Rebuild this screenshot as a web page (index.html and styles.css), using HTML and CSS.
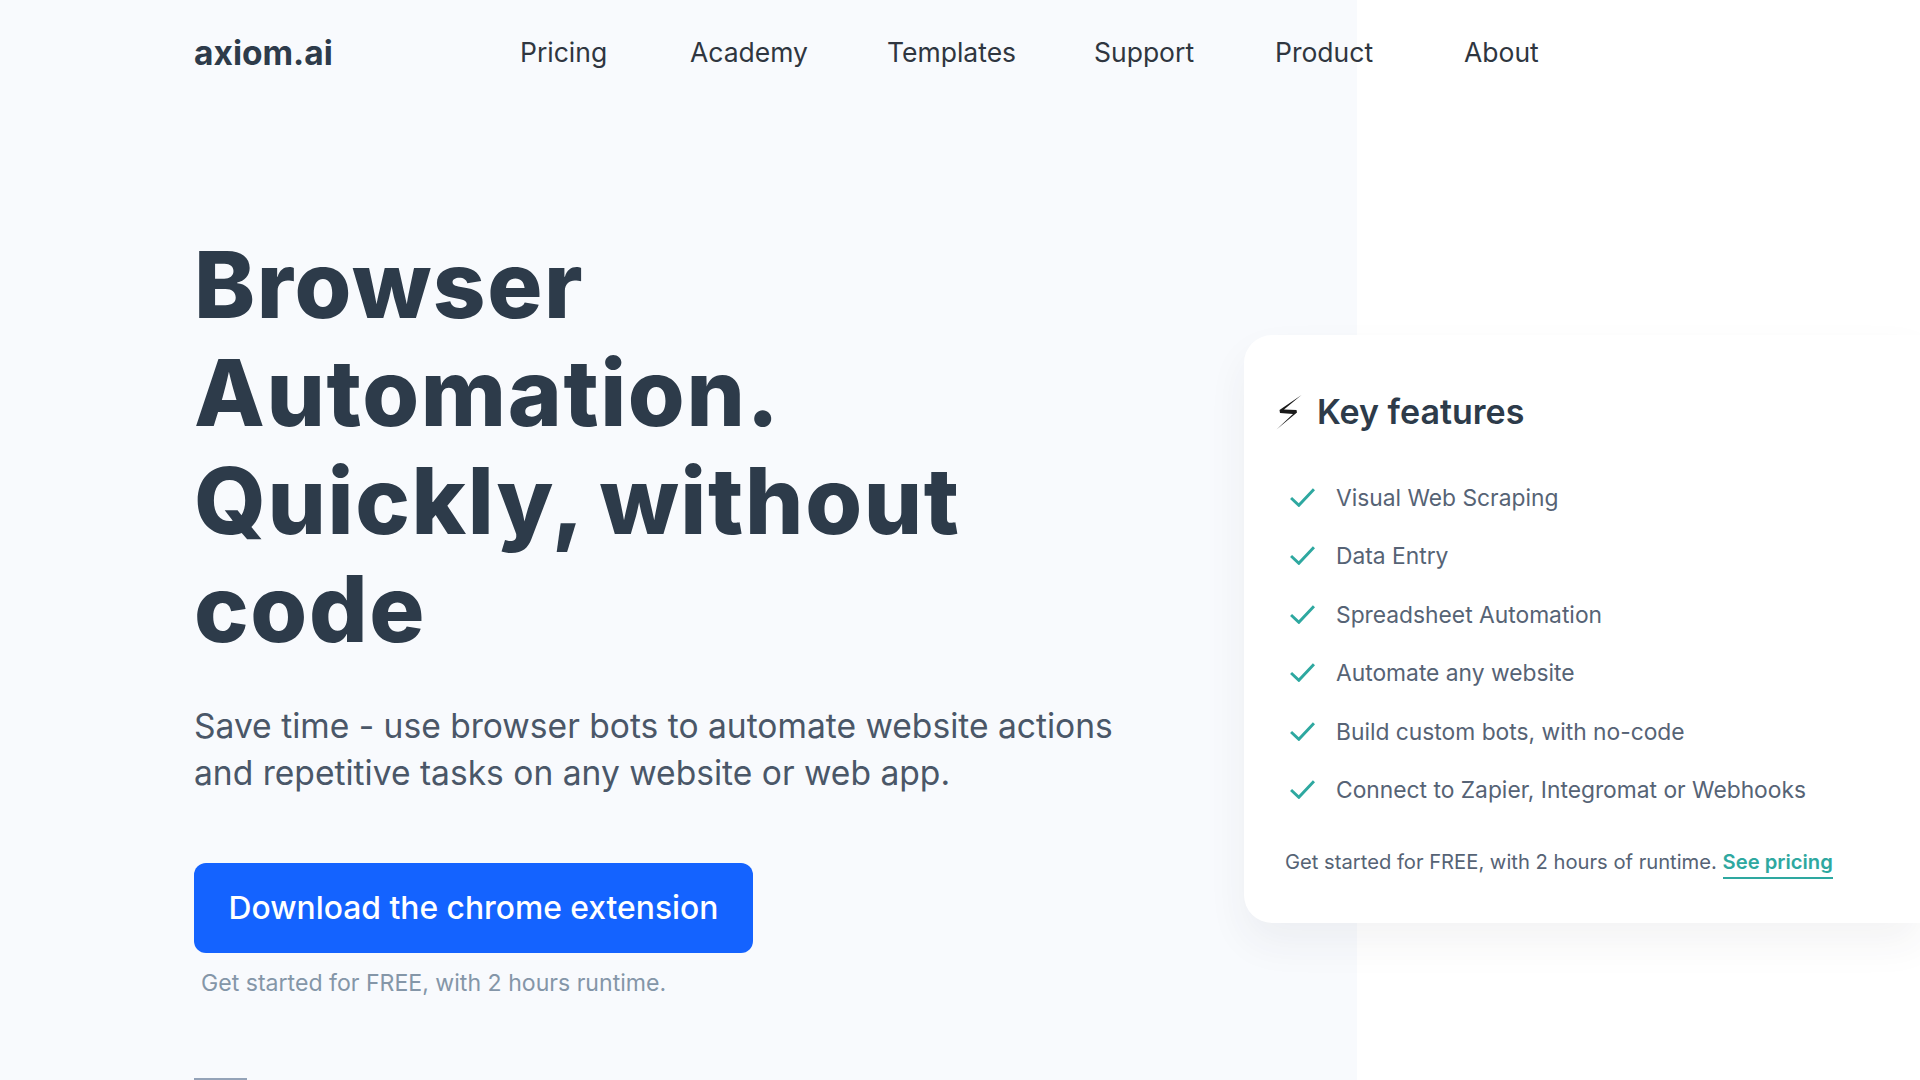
FILE: index.html
```html
<!DOCTYPE html>
<html lang="en">

<head>
    <meta charset="UTF-8">
    <meta name="viewport" content="width=device-width, initial-scale=1.0">
    <title>Axiom.ai - Browser Automation</title>
    <link rel="stylesheet" href="styles.css">
</head>

<body>
    <header class="site-header">
        <a class="logo" href="#">axiom.ai</a>
        <nav class="nav">
            <a href="#">Pricing</a>
            <a href="#">Academy</a>
            <a href="#">Templates</a>
            <a href="#">Support</a>
            <a href="#">Product</a>
            <a href="#">About</a>
        </nav>
    </header>

    <div class="hero">
        <main class="hero-main">
            <h1>Browser Automation. Quickly, without code</h1>
            <p class="lead">Save time - use browser bots to automate website actions and repetitive tasks on any website or web app.</p>
            <a class="btn" href="#">Download the chrome extension</a>
            <p class="btn-note">Get started for FREE, with 2 hours runtime.</p>
            <div class="rule"></div>
        </main>

        <aside class="card">
            <h2>
                <svg class="bolt" viewBox="0 0 26 36" aria-hidden="true">
                    <path d="M25.5 1 L3.5 16 L4 19 L17 20 L0.5 35.5 L21 18.5 L20.5 16 L8 15.5 Z" />
                </svg>
                Key features
            </h2>
            <ul class="features">
                <li><svg class="check" viewBox="0 0 24 18" aria-hidden="true"><path d="M1 9.5 L8.5 16.5 L23 1" /></svg>Visual Web Scraping</li>
                <li><svg class="check" viewBox="0 0 24 18" aria-hidden="true"><path d="M1 9.5 L8.5 16.5 L23 1" /></svg>Data Entry</li>
                <li><svg class="check" viewBox="0 0 24 18" aria-hidden="true"><path d="M1 9.5 L8.5 16.5 L23 1" /></svg>Spreadsheet Automation</li>
                <li><svg class="check" viewBox="0 0 24 18" aria-hidden="true"><path d="M1 9.5 L8.5 16.5 L23 1" /></svg>Automate any website</li>
                <li><svg class="check" viewBox="0 0 24 18" aria-hidden="true"><path d="M1 9.5 L8.5 16.5 L23 1" /></svg>Build custom bots, with no-code</li>
                <li><svg class="check" viewBox="0 0 24 18" aria-hidden="true"><path d="M1 9.5 L8.5 16.5 L23 1" /></svg>Connect to Zapier, Integromat or Webhooks</li>
            </ul>
            <p class="card-note">Get started for FREE, with 2 hours of runtime. <a href="#">See pricing</a></p>
        </aside>
    </div>
</body>

</html>
```

FILE: styles.css
```css
body {
    font-family: Inter, "Noto Sans", sans-serif;
    margin: 0;
    height: 1080px;
    overflow: hidden;
    color: #2d3b4a;
    background: linear-gradient(90deg, #f8fafd 1357px, #fff 1357px);
}

a {
    color: inherit;
    text-decoration: none;
}

.site-header {
    display: flex;
    align-items: center;
    height: 104px;
    padding-left: 194px;
}

.logo {
    width: 326px;
    padding-top: 2px;
    font-size: 33.5px;
    font-weight: 700;
}

.nav {
    display: grid;
    grid-template-columns: 170px 197px 207px 181px 189px auto;
    font-size: 26.5px;
    color: #2f3640;
}

.hero {
    display: flex;
    align-items: flex-start;
    justify-content: space-between;
}

.hero-main {
    width: 960px;
    padding: 127px 0 0 194px;
}

h1 {
    margin: 0;
    width: 800px;
    font-size: 92px;
    line-height: 108px;
    font-weight: 800;
    letter-spacing: 1.6px;
    word-spacing: -4px;
}

.lead {
    margin: 39px 0 0;
    width: 950px;
    font-size: 33.6px;
    line-height: 47px;
    color: #4a5768;
}

.btn {
    display: flex;
    align-items: center;
    justify-content: center;
    width: 559px;
    height: 90px;
    margin-top: 67px;
    padding-bottom: 2px;
    box-sizing: border-box;
    background-color: #1463ff;
    color: #fff;
    border-radius: 12px;
    font-size: 31.8px;
    font-weight: 500;
}

.btn-note {
    margin: 14px 0 0 7px;
    font-size: 23.1px;
    line-height: 32px;
    color: #8496a8;
}

.rule {
    width: 53px;
    height: 2px;
    margin-top: 79px;
    background-color: #94a3b8;
}

.card {
    width: 676px;
    height: 588px;
    box-sizing: border-box;
    margin-top: 231px;
    padding: 54px 0 0 32px;
    background-color: #fff;
    border-radius: 28px 0 0 28px;
    box-shadow: 0 20px 40px rgba(45, 59, 74, 0.06);
}

h2 {
    display: flex;
    align-items: center;
    gap: 15px;
    margin: 0;
    font-size: 34px;
    line-height: 46px;
    font-weight: 600;
}

.bolt {
    flex-shrink: 0;
    width: 26px;
    height: 36px;
    fill: #1a1a1a;
}

.features {
    list-style: none;
    margin: 33px 0 0;
    padding: 0 0 0 14px;
}

.features li {
    display: flex;
    align-items: center;
    gap: 21px;
    height: 58.5px;
    font-size: 22.8px;
    color: #566375;
}

.check {
    flex-shrink: 0;
    width: 25px;
    height: 19px;
    fill: none;
    stroke: #2ea8a0;
    stroke-width: 2.8;
}

.card-note {
    margin: 27px 0 0 9px;
    font-size: 20.2px;
    line-height: 32px;
    color: #566375;
}

.card-note a {
    color: #2ea8a0;
    font-weight: 600;
    border-bottom: 2px solid #2ea8a0;
    padding-bottom: 3px;
}
```
